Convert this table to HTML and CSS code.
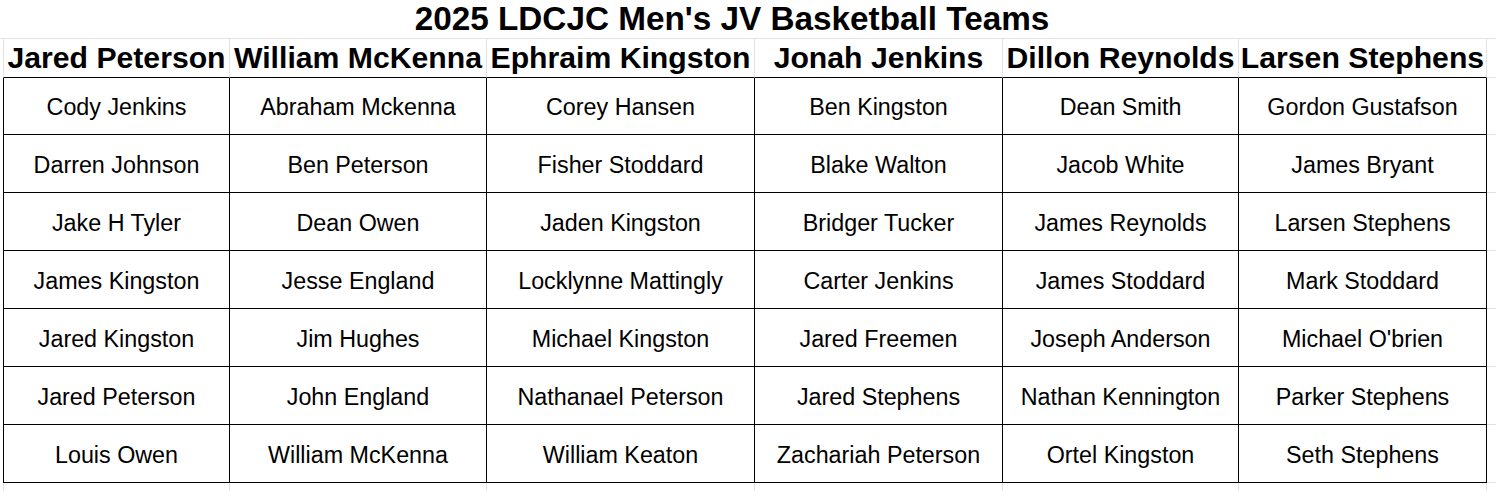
FILE: index.html
```html
<!DOCTYPE html>
<html lang="en">
<head>
<meta charset="utf-8">
<title>2025 LDCJC Men's JV Basketball Teams</title>
<link rel="stylesheet" href="styles.css">
</head>
<body>
<div class="title-row">
  <h1 class="title">2025 LDCJC Men's JV Basketball Teams</h1>
</div>
<table class="teams">
  <thead>
    <tr>
      <th class="c1">Jared Peterson</th>
      <th class="c2">William McKenna</th>
      <th class="c3">Ephraim Kingston</th>
      <th class="c4">Jonah Jenkins</th>
      <th class="c5">Dillon Reynolds</th>
      <th class="c6">Larsen Stephens</th>
      <th class="fill"></th>
    </tr>
  </thead>
  <tbody>
    <tr class="first">
      <td>Cody Jenkins</td><td>Abraham Mckenna</td><td>Corey Hansen</td><td>Ben Kingston</td><td>Dean Smith</td><td>Gordon Gustafson</td><td class="fill"></td>
    </tr>
    <tr>
      <td>Darren Johnson</td><td>Ben Peterson</td><td>Fisher Stoddard</td><td>Blake Walton</td><td>Jacob White</td><td>James Bryant</td><td class="fill"></td>
    </tr>
    <tr>
      <td>Jake H Tyler</td><td>Dean Owen</td><td>Jaden Kingston</td><td>Bridger Tucker</td><td>James Reynolds</td><td>Larsen Stephens</td><td class="fill"></td>
    </tr>
    <tr>
      <td>James Kingston</td><td>Jesse England</td><td>Locklynne Mattingly</td><td>Carter Jenkins</td><td>James Stoddard</td><td>Mark Stoddard</td><td class="fill"></td>
    </tr>
    <tr>
      <td>Jared Kingston</td><td>Jim Hughes</td><td>Michael Kingston</td><td>Jared Freemen</td><td>Joseph Anderson</td><td>Michael O'brien</td><td class="fill"></td>
    </tr>
    <tr>
      <td>Jared Peterson</td><td>John England</td><td>Nathanael Peterson</td><td>Jared Stephens</td><td>Nathan Kennington</td><td>Parker Stephens</td><td class="fill"></td>
    </tr>
    <tr>
      <td>Louis Owen</td><td>William McKenna</td><td>William Keaton</td><td>Zachariah Peterson</td><td>Ortel Kingston</td><td>Seth Stephens</td><td class="fill"></td>
    </tr>
    <tr class="blank">
      <td></td><td></td><td></td><td></td><td></td><td></td><td class="fill"></td>
    </tr>
  </tbody>
</table>
</body>
</html>
```

FILE: styles.css
```css
html, body {
  margin: 0;
  padding: 0;
  background: #ffffff;
  overflow: hidden;
}

body {
  font-family: "Liberation Sans", Arial, sans-serif;
  color: #000000;
}

.title-row {
  height: 38px;
  border-bottom: 1px solid #e2e2e2;
}

.title {
  margin: 0 0 0 3px;
  width: 1458px;
  height: 38px;
  line-height: 38px;
  font-size: 33.3px;
  font-weight: bold;
  text-align: center;
  white-space: nowrap;
}

.teams {
  margin-left: 3px;
  border-collapse: separate;
  border-spacing: 0;
  table-layout: fixed;
  width: 1524px;
}

.teams th,
.teams td {
  padding: 0;
  text-align: center;
  white-space: nowrap;
  overflow: hidden;
}

.teams th {
  box-sizing: border-box;
  height: 39px;
  vertical-align: middle;
  font-size: 30.2px;
  font-weight: bold;
  border-right: 1px solid #e2e2e2;
  border-bottom: 1px solid #000000;
}

.teams th.c1 { width: 227px; border-left: 1px solid #e2e2e2; }
.teams th.c2 { width: 257px; }
.teams th.c3 { width: 268px; }
.teams th.c4 { width: 248px; }
.teams th.c5 { width: 236px; }
.teams th.c6 { width: 248px; }
.teams th.fill { width: 40px; border-bottom-color: #e2e2e2; border-right: none; }

.teams td {
  box-sizing: border-box;
  height: 58px;
  padding-bottom: 13px;
  vertical-align: bottom;
  font-size: 23.3px;
  border-right: 1px solid #000000;
  border-bottom: 1px solid #000000;
}

.teams tr.first td {
  height: 57px;
}

.teams td:first-child {
  border-left: 1px solid #000000;
}

.teams td.fill {
  border-right: none;
  border-bottom-color: #e2e2e2;
}

.teams tr.blank td {
  height: 20px;
  padding-bottom: 0;
  border-bottom: none;
  border-right-color: #e2e2e2;
}

.teams tr.blank td:first-child {
  border-left-color: #e2e2e2;
}
```
